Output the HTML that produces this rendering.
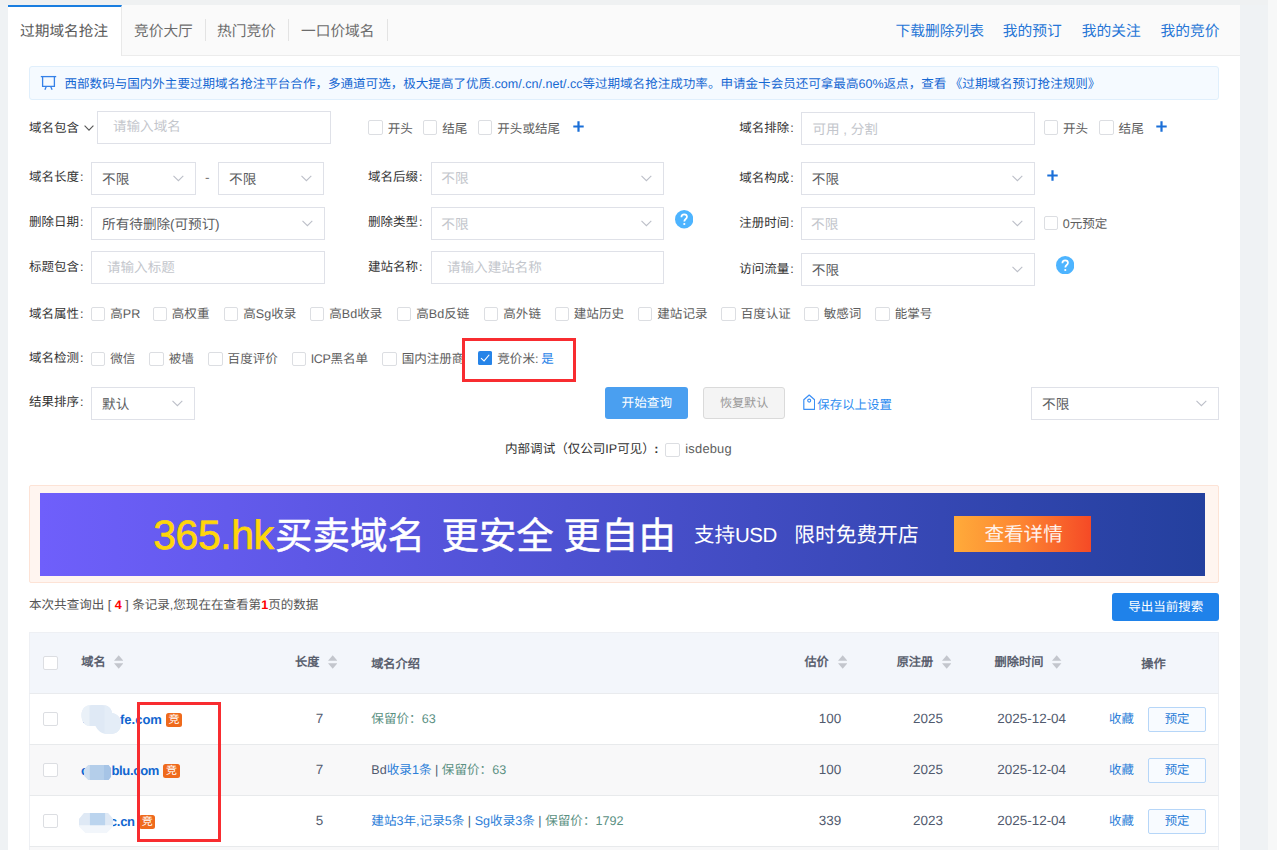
<!DOCTYPE html>
<html lang="zh-CN">
<head>
<meta charset="utf-8">
<title>过期域名抢注</title>
<style>
*{box-sizing:border-box;margin:0;padding:0}
html,body{width:1277px;height:850px;overflow:hidden}
body{text-rendering:geometricPrecision;background:#eff2f4;font-family:"Liberation Sans",sans-serif;position:relative;color:#515a6e;font-size:12px}
.a{position:absolute;white-space:nowrap}
.panel{left:8px;top:5px;width:1232px;height:845px;background:#fff}
.topstrip{left:0;top:0;width:1277px;height:5px;background:#eff1f2}
.sbar{left:1268px;top:0;width:9px;height:850px;background:#f7f8f8}
.tabbar{left:8px;top:5px;width:1232px;height:51px;background:#fafafa;border-bottom:1px solid #ececec}
.tabact{left:8px;top:5px;width:114px;height:51px;background:#fff;border-top:2px solid #1a7ee0;border-right:1px solid #e9e9e9}
.tab{font-size:14.7px;line-height:20px;top:21.9px;color:#6c6c6c}
.tsep{top:19px;width:1px;height:22px;background:#e3e3e3}
.tlink{font-size:14.75px;line-height:20px;top:21.9px;color:#2575d6}
.info{left:29px;top:66px;width:1190px;height:34px;background:#f5faff;border:1px solid #e0effc;border-radius:3px}
.infotxt{left:64.5px;top:76px;font-size:12.55px;line-height:16px;color:#1668d2}
.lbl{font-size:12.5px;line-height:16px;color:#333}
.box{border:1px solid #dfe1e8;background:#fff;height:33px}
.ph{font-size:13.55px;line-height:18px;color:#c3c6cc}
.val{font-size:13.65px;line-height:18px;color:#5c5e62}
.ph2{font-size:13.65px;line-height:18px;color:#c3c6cc}
.cb{width:14.4px;height:14.4px;border:1px solid #dcdee2;border-radius:2px;background:#fff}
.ct{font-size:12.55px;line-height:16px;color:#5e5e5e}
.chev{width:11px;height:6px}
.plus{width:11px;height:11px}
.q{width:18px;height:18px;border-radius:50%;background:#4db4ff}
.th{font-size:12.2px;line-height:16px;color:#5a606e;font-weight:bold}
.td{font-size:12.6px;line-height:16px;color:#515a6e}
.num{font-size:13.45px;line-height:16px;color:#515a6e}
.row{left:29px;width:1190px;height:51px;border-bottom:1px solid #e8eaec}
.dom{font-size:13px;line-height:16px;color:#1166d0;font-weight:bold}
.badge{width:16.6px;height:14.5px;background:#ef6a1c;border-radius:2.5px;color:#fff;font-size:11px;line-height:15.6px;text-align:center}
.blue{color:#2b7ed8}.teal{color:#5a9082}
.btnp{width:57.6px;height:25px;border:1px solid #b6d6f8;background:#f8fbff;border-radius:2px;color:#2b7ed8;font-size:12.4px;line-height:23px;text-align:center}
.fav{font-size:12.4px;line-height:16px;color:#2b7ed8}
.sort{width:10px;height:14px}
</style>
</head>
<body>
<div class="a topstrip"></div>
<div class="a sbar"></div>
<div class="a panel"></div>
<div class="a tabbar"></div>
<div class="a tabact"></div>
<div class="a tab" style="left:20px;color:#5a5a5a">过期域名抢注</div>
<div class="a tab" style="left:134px">竞价大厅</div>
<div class="a tab" style="left:217px">热门竞价</div>
<div class="a tab" style="left:301px">一口价域名</div>
<div class="a tsep" style="left:205px"></div>
<div class="a tsep" style="left:288px"></div>
<div class="a tsep" style="left:387px"></div>
<div class="a tlink" style="left:895.6px">下载删除列表</div>
<div class="a tlink" style="left:1002.8px">我的预订</div>
<div class="a tlink" style="left:1081.8px">我的关注</div>
<div class="a tlink" style="left:1160.6px">我的竞价</div>

<div class="a info"></div>
<svg class="a" style="left:40px;top:75px" width="17" height="16" viewBox="0 0 17 16"><g fill="none" stroke="#3581e8" stroke-width="1.3"><path d="M0.8 1.6H16.2"/><path d="M2.6 1.6V11.3H14.4V1.6"/><path d="M6.4 11.3L4.9 14.7M10.6 11.3L12.1 14.7"/></g></svg>
<div class="a infotxt">西部数码与国内外主要过期域名抢注平台合作，多通道可选，极大提高了优质.com/.cn/.net/.cc等过期域名抢注成功率。申请金卡会员还可拿最高60%返点，查看 《过期域名预订抢注规则》</div>

<!-- FORM -->
<div id="form">
<div class="a lbl" style="left:29px;top:120.39999999999999px">域名包含</div>
<svg class="a" style="left:84px;top:124.6px" width="10" height="6" viewBox="0 0 10 6"><path d="M0.6 0.6L5 5.1L9.4 0.6" fill="none" stroke="#555" stroke-width="1.1"/></svg>
<div class="a box" style="left:97px;top:110.6px;width:234px"><span class="a ph" style="left:15px;top:6.8px">请输入域名</span></div>
<div class="a cb" style="left:368.4px;top:120.2px"></div>
<div class="a ct" style="left:387.7px;top:120.5px;">开头</div>
<div class="a cb" style="left:423px;top:120.2px"></div>
<div class="a ct" style="left:442.3px;top:120.5px;">结尾</div>
<div class="a cb" style="left:478px;top:120.2px"></div>
<div class="a ct" style="left:497.3px;top:120.5px;">开头或结尾</div>
<svg class="a" style="left:572.7px;top:121.2px" width="11" height="11" viewBox="0 0 11 11"><path d="M5.5 0.3V10.7M0.3 5.5H10.7" stroke="#1a6fd8" stroke-width="2.2" fill="none"/></svg>
<div class="a lbl" style="left:739.3px;top:120.39999999999999px">域名排除<span style="margin-left:0.9px">:</span></div>
<div class="a box" style="left:800.8px;top:112px;width:234.5px"><span class="a ph" style="left:10.6px;top:7.8px">可用 , 分割</span></div>
<div class="a cb" style="left:1043.6px;top:120.2px"></div>
<div class="a ct" style="left:1062.8999999999999px;top:120.5px;">开头</div>
<div class="a cb" style="left:1099.3px;top:120.2px"></div>
<div class="a ct" style="left:1118.6px;top:120.5px;">结尾</div>
<svg class="a" style="left:1156px;top:121.2px" width="11" height="11" viewBox="0 0 11 11"><path d="M5.5 0.3V10.7M0.3 5.5H10.7" stroke="#1a6fd8" stroke-width="2.2" fill="none"/></svg>
<div class="a lbl" style="left:29px;top:169.10000000000002px">域名长度<span style="margin-left:0.9px">:</span></div>
<div class="a box" style="left:91px;top:162px;width:105px;height:33px"><span class="a val" style="left:10px;top:7.8px">不限</span><svg class="a" style="right:11.2px;top:11.6px" width="11" height="7" viewBox="0 0 11 7"><path d="M0.5 0.8L5.4 5.7L10.3 0.8" fill="none" stroke="#bcbfc8" stroke-width="1.1"/></svg></div>
<div class="a val" style="left:205px;top:169px;color:#777">-</div>
<div class="a box" style="left:218px;top:162px;width:106px;height:33px"><span class="a val" style="left:10px;top:7.8px">不限</span><svg class="a" style="right:11.2px;top:11.6px" width="11" height="7" viewBox="0 0 11 7"><path d="M0.5 0.8L5.4 5.7L10.3 0.8" fill="none" stroke="#bcbfc8" stroke-width="1.1"/></svg></div>
<div class="a lbl" style="left:368px;top:169.10000000000002px">域名后缀<span style="margin-left:0.9px">:</span></div>
<div class="a box" style="left:431px;top:162px;width:233px;height:33px"><span class="a ph2" style="left:9.3px;top:7.4px">不限</span><svg class="a" style="right:11.2px;top:11.6px" width="11" height="7" viewBox="0 0 11 7"><path d="M0.5 0.8L5.4 5.7L10.3 0.8" fill="none" stroke="#bcbfc8" stroke-width="1.1"/></svg></div>
<div class="a lbl" style="left:739.3px;top:169.60000000000002px">域名构成<span style="margin-left:0.9px">:</span></div>
<div class="a box" style="left:800.8px;top:162px;width:234.5px;height:33px"><span class="a val" style="left:10px;top:7.8px">不限</span><svg class="a" style="right:11.2px;top:11.6px" width="11" height="7" viewBox="0 0 11 7"><path d="M0.5 0.8L5.4 5.7L10.3 0.8" fill="none" stroke="#bcbfc8" stroke-width="1.1"/></svg></div>
<svg class="a" style="left:1047px;top:170px" width="11" height="11" viewBox="0 0 11 11"><path d="M5.5 0.3V10.7M0.3 5.5H10.7" stroke="#1a6fd8" stroke-width="2.2" fill="none"/></svg>
<div class="a lbl" style="left:29px;top:214.20000000000002px">删除日期<span style="margin-left:0.9px">:</span></div>
<div class="a box" style="left:91px;top:207.2px;width:234px;height:33.3px"><span class="a val" style="left:10px;top:7.8px">所有待删除<span style="margin:0 -0.2px 0 -0.2px">(</span>可预订<span style="margin-left:-0.3px">)</span></span><svg class="a" style="right:11.2px;top:11.6px" width="11" height="7" viewBox="0 0 11 7"><path d="M0.5 0.8L5.4 5.7L10.3 0.8" fill="none" stroke="#bcbfc8" stroke-width="1.1"/></svg></div>
<div class="a lbl" style="left:368px;top:214.20000000000002px">删除类型<span style="margin-left:0.9px">:</span></div>
<div class="a box" style="left:431px;top:207.2px;width:233px;height:33.3px"><span class="a ph2" style="left:9.3px;top:7.4px">不限</span><svg class="a" style="right:11.2px;top:11.6px" width="11" height="7" viewBox="0 0 11 7"><path d="M0.5 0.8L5.4 5.7L10.3 0.8" fill="none" stroke="#bcbfc8" stroke-width="1.1"/></svg></div>
<svg class="a" style="left:674.8px;top:210.20000000000002px" width="18.4" height="18.4" viewBox="0 0 18.4 18.4"><circle cx="9.2" cy="9.2" r="9.2" fill="#4db4ff"/><path d="M6.4 7.2C6.4 5.2 7.6 4.3 9.2 4.3C10.9 4.3 12 5.3 12 6.8C12 9 9.3 9 9.3 11.4" fill="none" stroke="#fff" stroke-width="1.7"/><circle cx="9.3" cy="14" r="1.1" fill="#fff"/></svg>
<div class="a lbl" style="left:739.3px;top:214.70000000000002px">注册时间<span style="margin-left:0.9px">:</span></div>
<div class="a box" style="left:800.8px;top:207.2px;width:234.5px;height:33.3px"><span class="a ph2" style="left:9.3px;top:7.4px">不限</span><svg class="a" style="right:11.2px;top:11.6px" width="11" height="7" viewBox="0 0 11 7"><path d="M0.5 0.8L5.4 5.7L10.3 0.8" fill="none" stroke="#bcbfc8" stroke-width="1.1"/></svg></div>
<div class="a cb" style="left:1043.5px;top:216px"></div>
<div class="a ct" style="left:1062.8px;top:216.3px;">0元预定</div>
<div class="a lbl" style="left:29px;top:259.3px">标题包含<span style="margin-left:0.9px">:</span></div>
<div class="a box" style="left:91px;top:251px;width:234px"><span class="a ph" style="left:15px;top:6.8px">请输入标题</span></div>
<div class="a lbl" style="left:368px;top:259.3px">建站名称<span style="margin-left:0.9px">:</span></div>
<div class="a box" style="left:431px;top:251px;width:233px"><span class="a ph" style="left:15px;top:6.8px">请输入建站名称</span></div>
<div class="a lbl" style="left:739.3px;top:260.5px">访问流量<span style="margin-left:0.9px">:</span></div>
<div class="a box" style="left:800.8px;top:253px;width:234.5px;height:33px"><span class="a val" style="left:10px;top:7.8px">不限</span><svg class="a" style="right:11.2px;top:11.6px" width="11" height="7" viewBox="0 0 11 7"><path d="M0.5 0.8L5.4 5.7L10.3 0.8" fill="none" stroke="#bcbfc8" stroke-width="1.1"/></svg></div>
<svg class="a" style="left:1055.8px;top:255.8px" width="18.4" height="18.4" viewBox="0 0 18.4 18.4"><circle cx="9.2" cy="9.2" r="9.2" fill="#4db4ff"/><path d="M6.4 7.2C6.4 5.2 7.6 4.3 9.2 4.3C10.9 4.3 12 5.3 12 6.8C12 9 9.3 9 9.3 11.4" fill="none" stroke="#fff" stroke-width="1.7"/><circle cx="9.3" cy="14" r="1.1" fill="#fff"/></svg>
<div class="a lbl" style="left:29px;top:305.5px">域名属性<span style="margin-left:0.9px">:</span></div>
<div class="a cb" style="left:91px;top:307px"></div>
<div class="a ct" style="left:110.3px;top:306.4px;">高PR</div>
<div class="a cb" style="left:152.5px;top:307px"></div>
<div class="a ct" style="left:171.8px;top:306.4px;">高权重</div>
<div class="a cb" style="left:224px;top:307px"></div>
<div class="a ct" style="left:243.3px;top:306.4px;">高Sg收录</div>
<div class="a cb" style="left:310px;top:307px"></div>
<div class="a ct" style="left:329.3px;top:306.4px;">高Bd收录</div>
<div class="a cb" style="left:397px;top:307px"></div>
<div class="a ct" style="left:416.3px;top:306.4px;">高Bd反链</div>
<div class="a cb" style="left:484px;top:307px"></div>
<div class="a ct" style="left:503.3px;top:306.4px;">高外链</div>
<div class="a cb" style="left:554.5px;top:307px"></div>
<div class="a ct" style="left:573.8px;top:306.4px;">建站历史</div>
<div class="a cb" style="left:638px;top:307px"></div>
<div class="a ct" style="left:657.3px;top:306.4px;">建站记录</div>
<div class="a cb" style="left:721.4px;top:307px"></div>
<div class="a ct" style="left:740.6999999999999px;top:306.4px;">百度认证</div>
<div class="a cb" style="left:804.4px;top:307px"></div>
<div class="a ct" style="left:823.6999999999999px;top:306.4px;">敏感词</div>
<div class="a cb" style="left:875.4px;top:307px"></div>
<div class="a ct" style="left:894.6999999999999px;top:306.4px;">能掌号</div>
<div class="a lbl" style="left:29px;top:350.3px">域名检测<span style="margin-left:0.9px">:</span></div>
<div class="a cb" style="left:91px;top:352px"></div>
<div class="a ct" style="left:110.3px;top:351.3px;">微信</div>
<div class="a cb" style="left:149.4px;top:352px"></div>
<div class="a ct" style="left:168.70000000000002px;top:351.3px;">被墙</div>
<div class="a cb" style="left:208.3px;top:352px"></div>
<div class="a ct" style="left:227.60000000000002px;top:351.3px;">百度评价</div>
<div class="a cb" style="left:291.5px;top:352px"></div>
<div class="a ct" style="left:310.8px;top:351.3px;"><span style="letter-spacing:-0.45px">ICP</span>黑名单</div>
<div class="a cb" style="left:382.4px;top:352px"></div>
<div class="a ct" style="left:401.7px;top:351.3px;">国内注册商</div>
<div class="a" style="left:462px;top:338px;width:114.2px;height:44px;border:3.2px solid #f82c30;background:#fff"></div>
<svg class="a" style="left:478px;top:351.2px" width="14.2" height="14.2" viewBox="0 0 14 14"><rect width="14" height="14" rx="2" fill="#2684e8"/><path d="M2.9 7.1L6 9.8L11.1 3.7" fill="none" stroke="#fff" stroke-width="1.1"/></svg>
<div class="a ct" style="left:497.3px;top:350.6px">竞价米:<span style="color:#2b85e8;position:absolute;left:44px;top:0">是</span></div>
<div class="a lbl" style="left:29px;top:394.1px">结果排序<span style="margin-left:0.9px">:</span></div>
<div class="a box" style="left:91px;top:387px;width:104px;height:33px"><span class="a val" style="left:10px;top:7.8px">默认</span><svg class="a" style="right:11.2px;top:11.6px" width="11" height="7" viewBox="0 0 11 7"><path d="M0.5 0.8L5.4 5.7L10.3 0.8" fill="none" stroke="#bcbfc8" stroke-width="1.1"/></svg></div>
<div class="a" style="left:605.3px;top:387.2px;width:83px;height:32px;background:#4a9ff0;border-radius:3px;color:#fff;font-size:12.6px;line-height:33.6px;text-align:center">开始查询</div>
<div class="a" style="left:703.2px;top:387.2px;width:81.8px;height:32px;background:#f4f4f4;border:1px solid #dadada;border-radius:3px;color:#999;font-size:12.1px;line-height:31.6px;text-align:center">恢复默认</div>
<svg class="a" style="left:802.8px;top:394.4px" width="12.4" height="16" viewBox="0 0 12.4 16"><path d="M6.2 1L11.6 5.8V15.3H0.8V5.8Z" fill="none" stroke="#3b8ff5" stroke-width="1.2" stroke-linejoin="round"/><circle cx="6.2" cy="6.6" r="1.5" fill="none" stroke="#3b8ff5" stroke-width="1.1"/></svg>
<div class="a" style="left:817.3px;top:397.2px;font-size:12.45px;line-height:16px;color:#2d8cf0">保存以上设置</div>
<div class="a box" style="left:1031px;top:387px;width:188px;height:33px"><span class="a val" style="left:10px;top:7.8px">不限</span><svg class="a" style="right:11.2px;top:11.6px" width="11" height="7" viewBox="0 0 11 7"><path d="M0.5 0.8L5.4 5.7L10.3 0.8" fill="none" stroke="#bcbfc8" stroke-width="1.1"/></svg></div>
<div class="a ct" style="left:505px;top:441.2px;color:#333">内部调试（仅公司IP可见）</div>
<div class="a ct" style="left:654.2px;top:440.8px;color:#333;font-weight:bold">:</div>
<div class="a cb" style="left:665.4px;top:442.5px"></div>
<div class="a ct" style="left:685.3px;top:442.8px;font-size:12.9px;letter-spacing:0.2px;top:441.2px">isdebug</div>
</div><!--/form-->

<!-- BANNER -->
<div id="banner">
<div class="a" style="left:29px;top:485px;width:1190px;height:97.5px;background:#fff5f0;border:1px solid #fde3d6;border-radius:2px"></div>
<div class="a" style="left:40px;top:493px;width:1165px;height:83px;background:linear-gradient(90deg,#6f5ffb 0%,#24409e 100%)"></div>
<div class="a" style="left:153.2px;top:508.5px;font-size:41px;line-height:53px;color:#ffd60a;letter-spacing:-0.45px;-webkit-text-stroke:0.7px #ffd60a">365.hk</div>
<div class="a" style="left:275px;top:512.3px;font-size:37.5px;line-height:49px;color:#fff;-webkit-text-stroke:0.5px #fff">买卖域名</div>
<div class="a" style="left:441.5px;top:512.3px;font-size:37.4px;line-height:49px;color:#fff;-webkit-text-stroke:0.5px #fff">更安全</div>
<div class="a" style="left:563.6px;top:512.3px;font-size:37.4px;line-height:49px;color:#fff;-webkit-text-stroke:0.5px #fff">更自由</div>
<div class="a" style="left:694px;top:522.0px;font-size:20.5px;line-height:27px;color:#fff;">支持<span style="letter-spacing:-0.5px">USD</span></div>
<div class="a" style="left:794.2px;top:522.0px;font-size:20.75px;line-height:27px;color:#fff;">限时免费开店</div>
<div class="a" style="left:954.2px;top:516px;width:137.2px;height:36px;background:linear-gradient(90deg,#ffab3a 0%,#fd8632 48%,#f54a26 100%)"></div>
<div class="a" style="left:984.4px;top:522.5px;font-size:19.6px;line-height:25px;color:#fff1ea;">查看详情</div>
<div class="a" style="left:29px;top:596.6px;font-size:12.55px;line-height:16px;color:#555">本次共查询出 [ <b style="color:#f00">4</b> ] 条记录,您现在在查看第<b style="color:#f00">1</b>页的数据</div>
<div class="a" style="left:1112.2px;top:593.2px;width:107px;height:28px;background:#1f82ea;border-radius:3px;color:#fff;font-size:12.5px;line-height:28.6px;text-align:center">导出当前搜索</div>
<div class="a" style="left:29px;top:632px;width:1190px;height:61.5px;background:#f3f6fb;border:1px solid #eef0f4;border-bottom:1px solid #e9ebee"></div>
<div class="a cb" style="left:43.2px;top:655.8px"></div>
<div class="a th" style="left:81.3px;top:653.5px">域名</div>
<svg class="a" style="left:113.8px;top:655px" width="9.4" height="14" viewBox="0 0 10 14" preserveAspectRatio="none"><path d="M0 5.7L5 0.2L10 5.7Z M0 8.3L5 13.8L10 8.3Z" fill="#c3c6cd"/></svg>
<div class="a th" style="left:295px;top:653.5px">长度</div>
<svg class="a" style="left:327.6px;top:655px" width="9.4" height="14" viewBox="0 0 10 14" preserveAspectRatio="none"><path d="M0 5.7L5 0.2L10 5.7Z M0 8.3L5 13.8L10 8.3Z" fill="#c3c6cd"/></svg>
<div class="a th" style="left:371.2px;top:655.7px">域名介绍</div>
<div class="a th" style="left:804.4px;top:653.5px">估价</div>
<svg class="a" style="left:837.7px;top:655px" width="9.4" height="14" viewBox="0 0 10 14" preserveAspectRatio="none"><path d="M0 5.7L5 0.2L10 5.7Z M0 8.3L5 13.8L10 8.3Z" fill="#c3c6cd"/></svg>
<div class="a th" style="left:896.7px;top:653.5px">原注册</div>
<svg class="a" style="left:941.9px;top:655px" width="9.4" height="14" viewBox="0 0 10 14" preserveAspectRatio="none"><path d="M0 5.7L5 0.2L10 5.7Z M0 8.3L5 13.8L10 8.3Z" fill="#c3c6cd"/></svg>
<div class="a th" style="left:994.6px;top:653.5px">删除时间</div>
<svg class="a" style="left:1052.4px;top:655px" width="9.4" height="14" viewBox="0 0 10 14" preserveAspectRatio="none"><path d="M0 5.7L5 0.2L10 5.7Z M0 8.3L5 13.8L10 8.3Z" fill="#c3c6cd"/></svg>
<div class="a th" style="left:1141.3px;top:655.7px">操作</div>
<div class="a row" style="top:693.5px;background:#fff;border-left:1px solid #eef0f4;border-right:1px solid #eef0f4"></div>
<div class="a cb" style="left:43.2px;top:712.0px"></div>
<div class="a dom" style="left:120px;top:712.1px;">fe.com</div>
<div class="a badge" style="left:165.7px;top:712.7px">竞</div>
<div class="a num" style="left:269.6px;width:100px;text-align:center;top:711.2px">7</div>
<div class="a td" style="left:371.3px;top:711.4px"><span class="teal">保留价：63</span></div>
<div class="a num" style="left:780px;width:100px;text-align:center;top:711.4px">100</div>
<div class="a num" style="left:878px;width:100px;text-align:center;top:711.4px">2025</div>
<div class="a num" style="left:981.7px;width:100px;text-align:center;top:711.4px">2025-12-04</div>
<div class="a fav" style="left:1109px;top:710.5px">收藏</div>
<div class="a btnp" style="left:1148.3px;top:706.5px">预定</div>
<div class="a row" style="top:744.5px;background:#f8f8f9;border-left:1px solid #eef0f4;border-right:1px solid #eef0f4"></div>
<div class="a cb" style="left:43.2px;top:763.0px"></div>
<div class="a dom" style="left:111.4px;top:763.1px;letter-spacing:-0.3px">blu.com</div>
<div class="a badge" style="left:163.2px;top:763.7px">竞</div>
<div class="a num" style="left:269.6px;width:100px;text-align:center;top:762.2px">7</div>
<div class="a td" style="left:371.3px;top:762.4px">Bd<span class="blue">收录1条</span> | <span class="teal">保留价：63</span></div>
<div class="a num" style="left:780px;width:100px;text-align:center;top:762.4px">100</div>
<div class="a num" style="left:878px;width:100px;text-align:center;top:762.4px">2025</div>
<div class="a num" style="left:981.7px;width:100px;text-align:center;top:762.4px">2025-12-04</div>
<div class="a fav" style="left:1109px;top:761.5px">收藏</div>
<div class="a btnp" style="left:1148.3px;top:757.5px">预定</div>
<div class="a row" style="top:795.5px;background:#fff;border-left:1px solid #eef0f4;border-right:1px solid #eef0f4"></div>
<div class="a cb" style="left:43.2px;top:814.0px"></div>
<div class="a dom" style="left:109.8px;top:814.1px;letter-spacing:-0.25px">c.cn</div>
<div class="a badge" style="left:138.9px;top:814.7px">竞</div>
<div class="a num" style="left:269.6px;width:100px;text-align:center;top:813.2px">5</div>
<div class="a td" style="left:371.3px;top:813.4px"><span class="blue">建站3年,记录5条</span> | <span class="blue">Sg收录3条</span> | <span class="teal">保留价：1792</span></div>
<div class="a num" style="left:780px;width:100px;text-align:center;top:813.4px">339</div>
<div class="a num" style="left:878px;width:100px;text-align:center;top:813.4px">2023</div>
<div class="a num" style="left:981.7px;width:100px;text-align:center;top:813.4px">2025-12-04</div>
<div class="a fav" style="left:1109px;top:812.5px">收藏</div>
<div class="a btnp" style="left:1148.3px;top:808.5px">预定</div>
<div class="a row" style="top:846.5px;background:#f8f8f9;border-left:1px solid #eef0f4;border-right:1px solid #eef0f4"></div>
<div class="a" style="left:82.5px;top:720.8px;width:2px;height:2.4px;background:#3a4fc0;border-radius:1px"></div>
<svg class="a" style="left:80px;top:704px" width="42" height="31" viewBox="0 0 42 31"><path d="M1.5 11C1.5 4.5 6 1 12 1H22C28 1 31.5 4 32 9C37.5 10 41 14 41 19.5C41 26 36.5 30 30.5 30H27C21 30 17.5 26 15.5 22H10C5 22 1.5 18 1.5 11Z" fill="#dfe9f5"/><path d="M1.5 11C1.5 4.5 6 1 9.5 1V22C5 21.5 1.5 18 1.5 11Z" fill="#eaf1f8"/><path d="M24.5 1.5C29 2 31.5 5 32 9C37.5 10 41 14 41 19.5C41 26 36.5 30 30.5 30H27C26 30 25 29.8 24.5 29.6Z" fill="#e4edf7"/></svg>
<div class="a dom" style="left:81px;top:763px">c</div>
<svg class="a" style="left:84.4px;top:765px" width="27.2" height="15" viewBox="0 0 27.2 15"><defs><clipPath id="ob"><path d="M4.5 0H24.5L27.2 3.5V11.5L24.5 15H4.5L0 10.5V4.5Z"/></clipPath></defs><g clip-path="url(#ob)"><rect width="27.2" height="15" fill="#b4ceea"/><rect width="5.8" height="15" fill="#cfdff1"/><rect x="20" width="7.2" height="15" fill="#a6c4e6"/></g></svg>
<svg class="a" style="left:79px;top:812.8px" width="34.2" height="20.2" viewBox="0 0 34.2 20.2"><defs><clipPath id="oc"><path d="M5 0H29L34.2 6V13.5L27.5 20.2H6.5L0 13.5V6Z"/></clipPath></defs><g clip-path="url(#oc)"><rect width="34.2" height="20.2" fill="#f2f6fb"/><rect width="34.2" height="12.2" fill="#dfe9f5"/><rect x="10.9" width="15.2" height="12.2" fill="#bbd4ee"/></g></svg>
<div class="a" style="left:137px;top:702px;width:83.6px;height:140px;border:3.1px solid #f82c30"></div>
</div><!--/banner-->

<!-- TABLE -->
<div id="table"></div>
</body>
</html>
